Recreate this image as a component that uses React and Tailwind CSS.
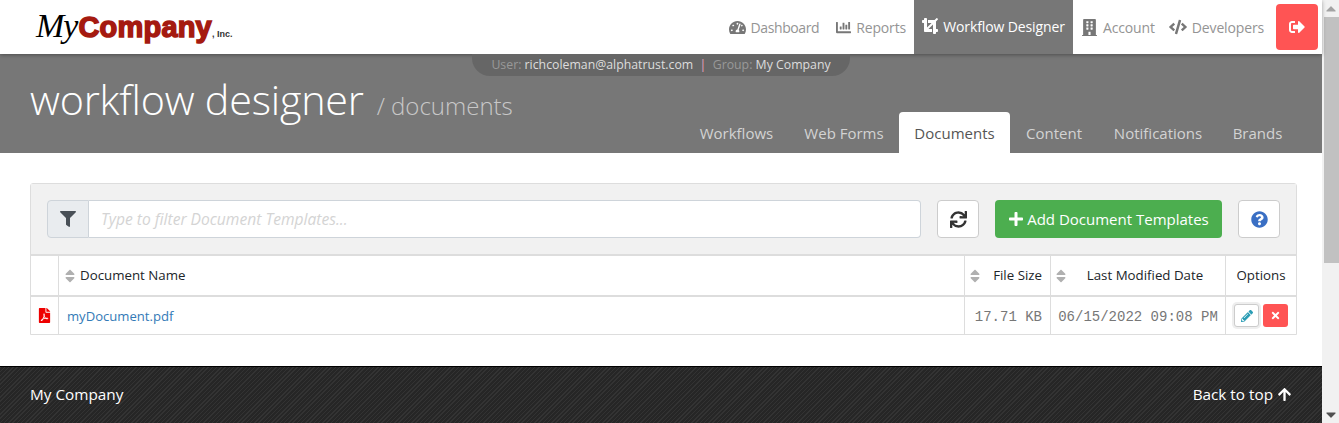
import React from "react";
import { FaTachometerAlt, FaChartBar, FaCrop, FaBuilding, FaCode, FaSignOutAlt, FaFilter, FaSync, FaPlus, FaQuestionCircle, FaFilePdf, FaSort, FaPencilAlt, FaTimes, FaArrowUp, FaCaretUp, FaCaretDown } from "react-icons/fa";

function NavItem({ icon, label, cls }) {
  return (
    <a className={"flex items-center gap-[5px] h-full text-[14px] text-[#949494] " + (cls || "")}>
      {icon}
      <span>{label}</span>
    </a>
  );
}

function SortIcon() {
  return <FaSort className="text-[#b0b0b0] text-[16px] shrink-0" />;
}

function Tab({ label, active, cls }) {
  return active ? (
    <a className={"h-[41px] flex items-center justify-center pt-[1px] bg-white rounded-t-[4px] text-[#555555] text-[15px] " + cls}>{label}</a>
  ) : (
    <a className={"h-[41px] flex items-center justify-center pt-[1px] text-[#d3d3d3] text-[15px] " + cls}>{label}</a>
  );
}

export default function App() {
  return (
    <div className="flex h-[423px] w-[1339px] overflow-hidden bg-white font-['Open_Sans','Noto_Sans',sans-serif]">
      <div className="w-[1322px] shrink-0 flex flex-col relative">
        <header className="h-[54px] shrink-0 flex items-center justify-between relative z-10 bg-white shadow-[0_1px_4px_rgba(0,0,0,0.35)]">
          <div className="pl-[36px] flex items-baseline h-full pt-[9px] select-none leading-none">
            <span className="text-[34px] italic text-black font-['Liberation_Serif',serif] tracking-[-1px]">My</span>
            <span className="text-[29px] font-bold text-[#a51a10] font-['Liberation_Sans',sans-serif] tracking-[0.2px] ml-[1px] [-webkit-text-stroke:1.5px_#a51a10]">Company</span>
            <span className="text-[9px] font-bold text-[#333333] font-['Liberation_Sans',sans-serif]">, Inc.</span>
          </div>
          <nav className="flex items-center h-full pr-[4px]">
            <NavItem cls="mr-[17px] tracking-[-0.4px]" icon={<FaTachometerAlt className="text-[17px] text-[#777777]" />} label="Dashboard" />
            <NavItem cls="mr-[8px] tracking-[-0.15px]" icon={<FaChartBar className="text-[15px] text-[#777777]" />} label="Reports" />
            <a className="h-full w-[159px] bg-[#777777] text-white text-[14px] tracking-[-0.12px] flex items-center justify-center gap-[5px] pb-[2px]">
              <FaCrop className="text-[16px]" />
              <span>Workflow Designer</span>
            </a>
            <NavItem cls="ml-[8px] mr-[14px] tracking-[-0.15px]" icon={<FaBuilding className="text-[17px] text-[#777777]" />} label="Account" />
            <NavItem cls="mr-[12px] tracking-[-0.15px]" icon={<FaCode className="text-[18px] text-[#777777]" />} label="Developers" />
            <button className="w-[42px] h-[46px] bg-[#ff5454] rounded-[4px] flex items-center justify-center text-white">
              <FaSignOutAlt className="text-[16px]" />
            </button>
          </nav>
        </header>

        <div className="absolute left-[472px] top-[54px] w-[378px] h-[22px] z-20 bg-[#666666] rounded-b-[18px] flex items-center justify-center text-[12.3px] text-[#999999] whitespace-pre">
          <span>User: </span><span className="text-[#dddddd]">richcoleman@alphatrust.com</span><span className="text-[#e8a0c0]">{"  |  "}</span><span>Group: </span><span className="text-[#dddddd]">My Company</span>
        </div>

        <section className="h-[99px] shrink-0 bg-[#777777] flex items-end justify-between pl-[30px] pr-[25px]">
          <div className="flex items-baseline self-start pt-[25px] whitespace-nowrap leading-none">
            <h1 className="text-[41.3px] font-light text-white tracking-[-0.2px]">workflow designer</h1>
            <span className="text-[24px] font-light text-[#c8c8c8] ml-[13px]">/ documents</span>
          </div>
          <div className="flex items-end">
            <Tab label="Workflows" cls="w-[105px]" />
            <Tab label="Web Forms" cls="w-[110px]" />
            <Tab label="Documents" active cls="w-[111px]" />
            <Tab label="Content" cls="w-[88px]" />
            <Tab label="Notifications" cls="w-[120px]" />
            <Tab label="Brands" cls="w-[79px]" />
          </div>
        </section>

        <main className="flex-1 pl-[30px] pr-[25px] pt-[30px]">
          <div className="border border-[#dddddd] rounded-t-[3px]">
            <div className="h-[72px] bg-[#f1f1f1] flex items-center pl-[16px] pr-[16px] border-b-2 border-[#dddddd]">
              <div className="flex-1 h-[38px] flex">
                <div className="w-[42px] bg-[#e9ecef] border border-[#ced4da] rounded-l-[4px] flex items-center justify-center text-[#495057]">
                  <FaFilter className="text-[16px]" />
                </div>
                <div className="flex-1 bg-white border border-l-0 border-[#ced4da] rounded-r-[4px] flex items-center pl-[12px] pt-[2px] text-[15.6px] italic text-[#d4d4d4]">
                  Type to filter Document Templates...
                </div>
              </div>
              <button className="ml-[16px] w-[42px] h-[38px] bg-white border border-[#cccccc] rounded-[4px] flex items-center justify-center text-[#333333]">
                <FaSync className="text-[17px]" />
              </button>
              <button className="ml-[16px] w-[227px] h-[38px] bg-[#4cae4f] rounded-[4px] flex items-center justify-center gap-[3px] text-white text-[15px]">
                <FaPlus className="text-[16px]" />
                <span>Add Document Templates</span>
              </button>
              <button className="ml-[16px] w-[42px] h-[38px] bg-white border border-[#cccccc] rounded-[4px] flex items-center justify-center text-[#3a6fc4]">
                <FaQuestionCircle className="text-[17px]" />
              </button>
            </div>
            <div className="flex h-[41px] border-b-2 border-[#dddddd] text-[13.3px] text-[#212529]">
              <div className="w-[28px] border-r border-[#dddddd]"></div>
              <div className="flex-1 flex items-center pl-[3px] gap-[2px] border-r border-[#dddddd]"><SortIcon /><span>Document Name</span></div>
              <div className="w-[86px] flex items-center justify-between pl-[2px] pr-[8px] border-r border-[#dddddd]"><SortIcon /><span>File Size</span></div>
              <div className="w-[175px] flex items-center pl-[2px] border-r border-[#dddddd]"><SortIcon /><span className="flex-1 text-center pr-[4px]">Last Modified Date</span></div>
              <div className="w-[70px] flex items-center justify-center"><span>Options</span></div>
            </div>
            <div className="flex h-[37px]">
              <div className="w-[28px] border-r border-[#dddddd] flex items-center justify-center pb-[1px]"><FaFilePdf className="text-[15px] text-[#ee0000]" /></div>
              <div className="flex-1 flex items-center pl-[8px] pt-[2px] text-[13.1px] text-[#337ab7] border-r border-[#dddddd]">myDocument.pdf</div>
              <div className="w-[86px] flex items-center justify-end pr-[8px] pt-[3px] font-['Liberation_Mono',monospace] text-[14px] text-[#777777] border-r border-[#dddddd]">17.71 KB</div>
              <div className="w-[175px] flex items-center justify-center pt-[3px] font-['Liberation_Mono',monospace] text-[14px] text-[#777777] border-r border-[#dddddd]">06/15/2022 09:08 PM</div>
              <div className="w-[70px] flex items-center justify-center gap-[4px]">
                <button className="w-[25px] h-[23px] bg-white border border-[#cccccc] rounded-[3px] ring-2 ring-[#eeeeee] flex items-center justify-center text-[#2a9db5]"><FaPencilAlt className="text-[12px]" /></button>
                <button className="w-[25px] h-[23px] bg-[#ff5454] rounded-[3px] flex items-center justify-center text-white"><FaTimes className="text-[11px]" /></button>
              </div>
            </div>
          </div>
        </main>

        <footer className="h-[57px] shrink-0 border-t border-black bg-[#2b2b2b] bg-[repeating-linear-gradient(135deg,#333333_0px,#333333_1px,#262626_1px,#262626_3px)] flex items-start justify-between pt-[16px] px-[30px] text-white text-[15.3px]">
          <span>My Company</span>
          <span className="flex items-center gap-[4px]">Back to top <FaArrowUp className="text-[15px]" /></span>
        </footer>
      </div>

      <div className="w-[17px] shrink-0 bg-[#f1f1f1] flex flex-col items-center text-[#a3a3a3] relative">
        <FaCaretUp className="h-[17px] text-[10px]" />
        <div className="w-[15px] ml-[1px] h-[246px] bg-[#c1c1c1]"></div>
        <div className="flex-1"></div>
        <FaCaretDown className="h-[17px] text-[10px] text-[#505050]" />
      </div>
    </div>
  );
}
